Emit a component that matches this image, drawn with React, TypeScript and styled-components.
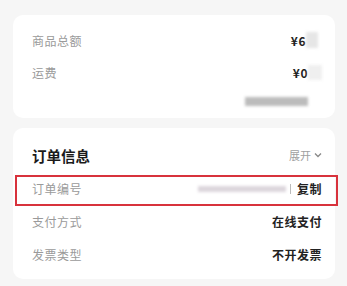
import React from "react";
import styled, { createGlobalStyle } from "styled-components";

const Global = createGlobalStyle`
  html, body { margin: 0; padding: 0; background: #f6f6f6; }
  body { font-family: "Noto Sans CJK SC", "Noto Sans", sans-serif; }
`;

const Page = styled.div`
  width: 347px;
  height: 286px;
  box-sizing: border-box;
  padding: 15px 12px 0 13px;
  display: flex;
  flex-direction: column;
  gap: 10px;
  position: relative;
  overflow: hidden;
`;

const Card = styled.div<{ $pt: number; $pb: number }>`
  background: #fff;
  border-radius: 10px;
  padding: ${(p) => p.$pt}px 13px ${(p) => p.$pb}px 19px;
  display: flex;
  flex-direction: column;
`;

const Row = styled.div<{ $h: number }>`
  height: ${(p) => p.$h}px;
  display: flex;
  align-items: center;
  justify-content: space-between;
  font-size: 12px;
`;

const Label = styled.span`
  color: #9a9a9a;
  letter-spacing: 0.5px;
`;

const Value = styled.span`
  color: #222;
  font-weight: 600;
  display: flex;
  align-items: center;
  letter-spacing: 0.5px;
`;

const Blur = styled.span<{ $w: number; $h: number; $c: string }>`
  display: inline-block;
  width: ${(p) => p.$w}px;
  height: ${(p) => p.$h}px;
  background: ${(p) => p.$c};
  filter: blur(1.5px);
`;

const Title = styled.span`
  font-size: 14.5px;
  font-weight: 700;
  color: #1a1a1a;
`;

const Toggle = styled.span`
  font-size: 11px;
  color: #a0a0a0;
  display: flex;
  align-items: center;
  gap: 3px;
`;

const Sep = styled.span`
  width: 1px;
  height: 10px;
  background: #bbb;
  margin: 0 6px 0 4px;
`;

const Highlight = styled.div`
  position: absolute;
  left: 15px;
  top: 175px;
  width: 323px;
  height: 31px;
  box-sizing: border-box;
  border: 2px solid #d8323c;
  pointer-events: none;
`;

export default function App() {
  return (
    <>
      <Global />
      <Page>
        <Card $pt={9} $pb={4}>
          <Row $h={32}>
            <Label>商品总额</Label>
            <Value>
              ¥6
              <Blur $w={12} $h={16} $c="#e6e6e6" style={{ marginRight: 4 }} />
            </Value>
          </Row>
          <Row $h={32}>
            <Label>运费</Label>
            <Value>
              ¥0
              <Blur $w={14} $h={15} $c="#efefef" />
            </Value>
          </Row>
          <Row $h={26}>
            <span />
            <Blur $w={63} $h={9} $c="#bcbcbc" style={{ marginRight: 14 }} />
          </Row>
        </Card>
        <Card $pt={10} $pb={8}>
          <Row $h={34}>
            <Title>订单信息</Title>
            <Toggle>
              展开
              <svg width="8" height="6" viewBox="0 0 8 6">
                <path d="M1 1.5 L4 4.5 L7 1.5" fill="none" stroke="#888" strokeWidth="1.3" />
              </svg>
            </Toggle>
          </Row>
          <Row $h={33}>
            <Label>订单编号</Label>
            <Value>
              <Blur $w={88} $h={6} $c="#dcd6dc" />
              <Sep />
              复制
            </Value>
          </Row>
          <Row $h={33}>
            <Label>支付方式</Label>
            <Value>在线支付</Value>
          </Row>
          <Row $h={33}>
            <Label>发票类型</Label>
            <Value>不开发票</Value>
          </Row>
        </Card>
        <Highlight />
      </Page>
    </>
  );
}
